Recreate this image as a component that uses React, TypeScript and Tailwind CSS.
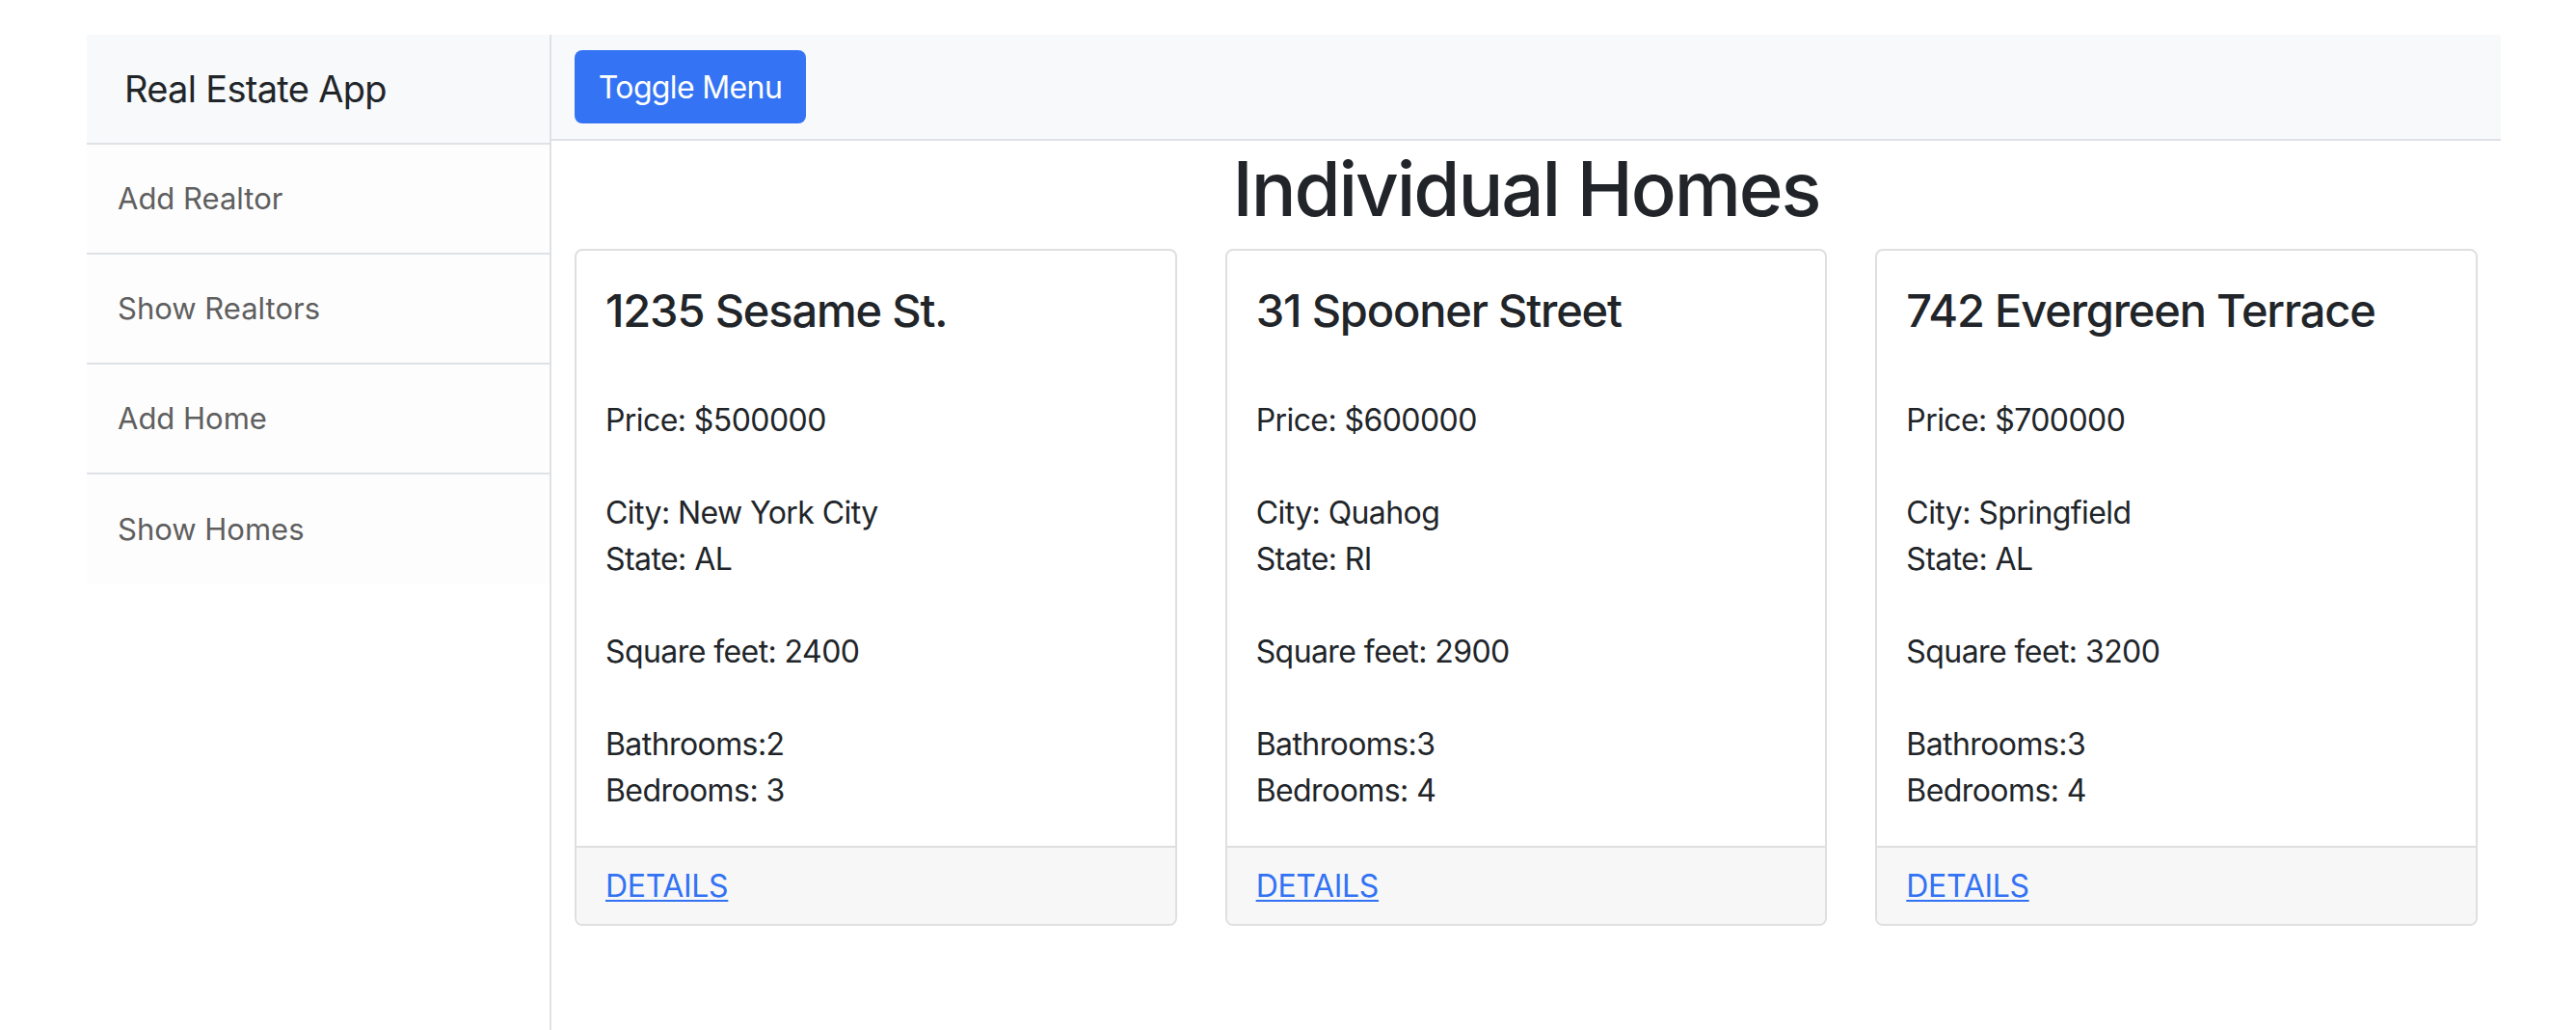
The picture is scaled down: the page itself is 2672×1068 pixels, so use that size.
const homes = [
  {
    address: "1235 Sesame St.",
    price: 500000,
    city: "New York City",
    state: "AL",
    sqft: 2400,
    bathrooms: 2,
    bedrooms: 3,
  },
  {
    address: "31 Spooner Street",
    price: 600000,
    city: "Quahog",
    state: "RI",
    sqft: 2900,
    bathrooms: 3,
    bedrooms: 4,
  },
  {
    address: "742 Evergreen Terrace",
    price: 700000,
    city: "Springfield",
    state: "AL",
    sqft: 3200,
    bathrooms: 3,
    bedrooms: 4,
  },
];

const menu = ["Add Realtor", "Show Realtors", "Add Home", "Show Homes"];

type Home = (typeof homes)[number];

const HomeCard = ({ home }: { home: Home }) => (
  <div className="flex flex-col rounded-[8px] border-2 border-[#dfdfdf] bg-white overflow-hidden">
    <div className="px-[30px] pt-[34px] pb-[33px] text-[32px] leading-[48px] tracking-[-0.018em] text-[#212529]">
      <h4 className="mb-[62px] text-[47px] leading-[56px] font-medium tracking-[-0.025em]">{home.address}</h4>
      <p className="mb-[48px]">Price: ${home.price}</p>
      <p className="mb-[48px]">
        City: {home.city}
        <br />
        State: {home.state}
      </p>
      <p className="mb-[48px]">Square feet: {home.sqft}</p>
      <p>
        Bathrooms:{home.bathrooms}
        <br />
        Bedrooms: {home.bedrooms}
      </p>
    </div>
    <div className="flex h-[81px] items-center border-t-2 border-[#dfdfdf] bg-[#f7f7f7] px-[30px]">
      <a
        href="#"
        className="text-[32px] leading-[48px] tracking-[-0.01em] text-[#3272f4] underline underline-offset-[3px] decoration-2"
      >
        DETAILS
      </a>
    </div>
  </div>
);

export default function App() {
  return (
    <div className="min-h-[1068px] bg-white pt-[36px] font-['Inter',sans-serif] text-[#212529]">
      <div className="ml-[90px] flex min-h-[1032px] w-[2504px]">
        <aside className="w-[482px] shrink-0 border-r-2 border-[#dee2e6]">
          <div className="flex h-[114px] items-center border-b-2 border-[#dee2e6] bg-[#f8f9fa] pl-[39px] text-[38px] tracking-[-0.018em]">
            Real Estate App
          </div>
          <nav className="flex flex-col">
            {menu.map((item, i) => (
              <a
                key={item}
                href="#"
                className={
                  "flex h-[114px] items-center bg-[#fdfdfd] pl-[32px] text-[31px] text-[#5f5f5f]" +
                  (i < menu.length - 1 ? " border-b-2 border-[#dee2e6]" : "")
                }
              >
                {item}
              </a>
            ))}
          </nav>
        </aside>
        <main className="flex-1">
          <div className="flex h-[110px] items-center border-b-2 border-[#dee2e6] bg-[#f8f9fa] px-[24px]">
            <button className="flex h-[76px] w-[240px] items-center justify-center rounded-[8px] bg-[#3474f4] pt-[2px] text-[32px] tracking-[-0.02em] text-white">
              Toggle Menu
            </button>
          </div>
          <h1 className="mt-[3px] mb-[15px] text-center text-[78px] leading-[94px] font-medium tracking-[-0.027em]">
            Individual Homes
          </h1>
          <div className="grid grid-cols-3 gap-[50px] px-[24px]">
            {homes.map((h) => (
              <HomeCard key={h.address} home={h} />
            ))}
          </div>
        </main>
      </div>
    </div>
  );
}
